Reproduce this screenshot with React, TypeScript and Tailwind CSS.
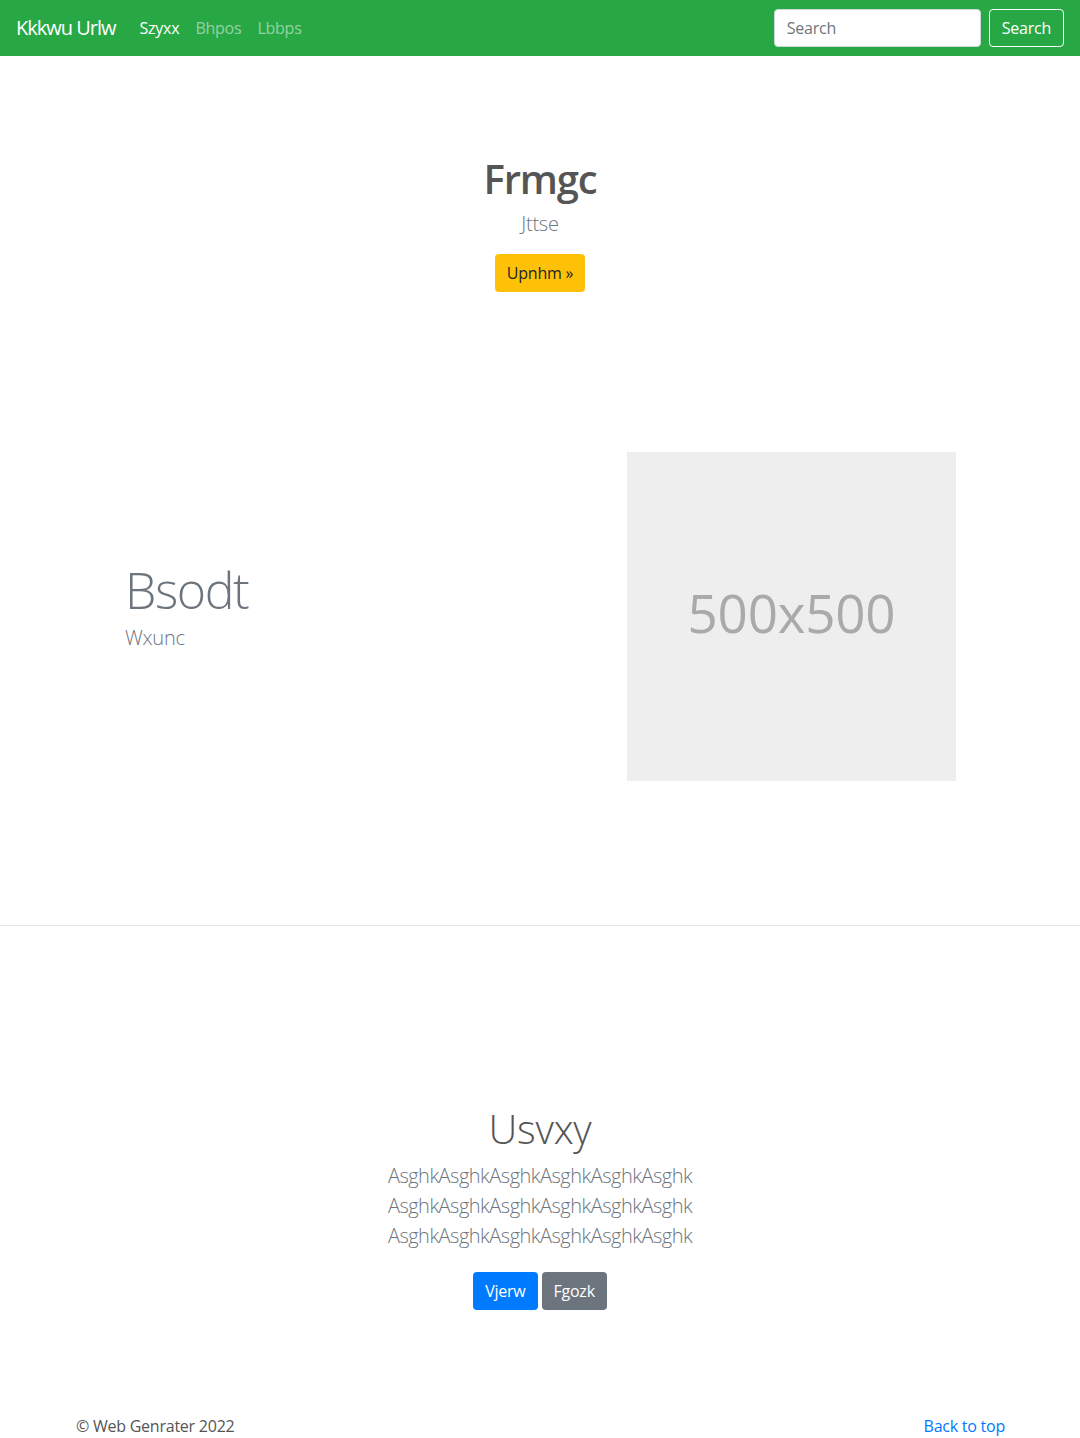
const font = { fontFamily: '"Open Sans", "Noto Sans", sans-serif' };

const lines = ["AsghkAsghkAsghkAsghkAsghkAsghk", "AsghkAsghkAsghkAsghkAsghkAsghk", "AsghkAsghkAsghkAsghkAsghkAsghk"];

const App = () => {
  return (
    <div className="min-h-[1438px] bg-white text-[#212529] tracking-[-0.015em]" style={font}>
      {/* navbar */}
      <nav className="h-14 bg-[#28a745] flex items-center px-4">
        <a href="#" className="text-xl text-white mr-4 tracking-[-0.05em]">
          Kkkwu Urlw
        </a>
        <ul className="flex">
          <li>
            <a href="#" className="px-2 text-white">
              Szyxx
            </a>
          </li>
          <li>
            <a href="#" className="px-2 text-white/50">
              Bhpos
            </a>
          </li>
          <li>
            <a href="#" className="px-2 text-white/50">
              Lbbps
            </a>
          </li>
        </ul>
        <form className="ml-auto flex items-center">
          <input
            type="text"
            placeholder="Search"
            className="w-[207px] h-[38px] mr-2 px-3 rounded bg-white border border-[#ced4da] text-base placeholder:text-[#6c757d]"
          />
          <button type="button" className="h-[38px] px-3 rounded border border-white text-white text-base">
            Search
          </button>
        </form>
      </nav>

      {/* hero */}
      <section className="pt-[99px] text-center">
        <h1 className="text-[40px] leading-[48px] font-semibold text-[#555] mb-[6px] tracking-[-0.03em]">Frmgc</h1>
        <p className="text-xl leading-[30px] font-light text-[#6c757d] mb-[15px]">Jttse</p>
        <a href="#" className="inline-flex items-center h-[38px] px-3 rounded bg-[#ffc107] text-base text-[#212529]">
          Upnhm »
        </a>
      </section>

      {/* featurette */}
      <div className="w-[930px] mx-auto mt-[160px] flex items-center">
        <div className="w-[465px] pl-[50px]">
          <h2 className="text-[50px] leading-none font-light tracking-[-1.4px] text-[#6c757d] mb-2">Bsodt</h2>
          <p className="text-xl leading-[30px] font-light text-[#6c757d] mb-4">Wxunc</p>
        </div>
        <div className="w-[465px] pl-[87px]">
          <div className="w-[329px] h-[329px] bg-[#eeeeee] flex items-center justify-center">
            <span className="text-[53px] text-[#aaaaaa] -mt-2">500x500</span>
          </div>
        </div>
      </div>

      <hr className="mt-[144px] border-t border-[#e5e5e5]" />

      {/* album header */}
      <section className="pt-[179px] text-center">
        <h1 className="text-[40px] leading-[48px] font-light text-[#555] mb-2">Usvxy</h1>
        <p className="text-xl leading-[30px] font-light text-[#6c757d] mb-[21px] tracking-[-0.025em]">
          {lines.map((l, i) => (
            <span key={i} className="block">
              {l}
            </span>
          ))}
        </p>
        <div className="flex justify-center gap-1">
          <a href="#" className="inline-flex items-center h-[38px] px-3 rounded bg-[#007bff] text-white text-base">
            Vjerw
          </a>
          <a href="#" className="inline-flex items-center h-[38px] px-3 rounded bg-[#6c757d] text-white text-base">
            Fgozk
          </a>
        </div>
      </section>

      {/* footer */}
      <footer className="w-[930px] mx-auto mt-[104px] flex justify-between text-base leading-6">
        <p className="text-[#555] pl-px">© Web Genrater 2022</p>
        <a href="#" className="text-[#007bff]">
          Back to top
        </a>
      </footer>
    </div>
  );
};

export default App;
